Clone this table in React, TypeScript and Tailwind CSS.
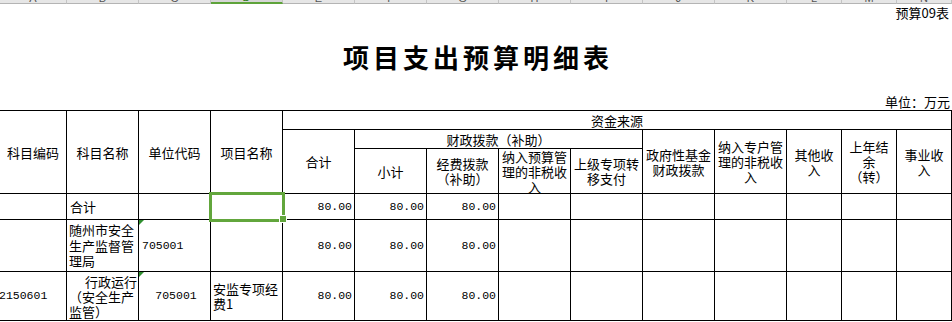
import React from "react";

const letters = ["A", "B", "C", "D", "E", "F", "G", "H", "I", "J", "K", "L", "M", "N"];

const hc =
  "border-r border-b border-black flex items-center justify-center text-center px-[2px] leading-[15px]";
const numCls =
  "border-r border-b border-black flex items-center justify-end pr-[2px] font-['Liberation_Mono',monospace] text-[11.5px]";
const emptyCls = "border-r border-b border-black";

function Num() {
  return <div className={numCls}>80.00</div>;
}

function Empties({ n }: { n: number }) {
  return (
    <>
      {Array.from({ length: n }).map((_, i) => (
        <div key={i} className={emptyCls} />
      ))}
    </>
  );
}

function Tri() {
  return (
    <div className="absolute top-0 left-0 w-0 h-0 border-t-[5px] border-t-[#2f8f2f] border-r-[5px] border-r-transparent" />
  );
}

export default function App() {
  return (
    <div className="w-[952px] h-[322px] overflow-hidden bg-white text-black font-['Noto_Sans_CJK_SC',sans-serif] text-[13px] [text-spacing-trim:space-all]">
      {/* Excel column header strip (cut off) */}
      <div className="grid grid-cols-[67px_repeat(10,72px)_55px_55px_55px] h-[4px] overflow-hidden bg-[#e6e6e6]">
        {letters.map((l, i) => (
          <div
            key={l}
            className={
              i === 3
                ? "flex justify-center items-end border-r border-r-[#c4c4c4] border-b-2 border-b-[#5ea33a] bg-[#d6d6d6] overflow-hidden text-[#2f7d1c]"
                : "flex justify-center items-end border-r border-r-[#c4c4c4] border-b border-b-[#b4b4b4] overflow-hidden text-[#555555]"
            }
          >
            <span className="-mb-[1px] text-[11px] leading-[11px] font-['Liberation_Sans',sans-serif]">{l}</span>
          </div>
        ))}
      </div>

      <div className="h-[18px] pt-[2px] pr-[3px] text-right text-[13px] leading-[13px]">预算09表</div>

      <div className="mt-[22px] h-[26px] text-center text-[26px] leading-[26px] font-bold tracking-[4px] pl-[4px]">
        项目支出预算明细表
      </div>

      <div className="mt-[25px] h-[13px] text-right pr-[2px] text-[13px] leading-[13px]">单位：万元</div>

      <div className="mt-[2px] grid grid-cols-[67px_repeat(10,72px)_55px_55px_55px] grid-rows-[19px_19px_45px_26px_52px_49px] border-t border-black">
        {/* header */}
        <div className={`${hc} col-start-1 row-start-1 row-span-3`}>科目编码</div>
        <div className={`${hc} col-start-2 row-start-1 row-span-3`}>科目名称</div>
        <div className={`${hc} col-start-3 row-start-1 row-span-3`}>单位代码</div>
        <div className={`${hc} col-start-4 row-start-1 row-span-3`}>项目名称</div>
        <div className={`${hc} col-start-5 col-span-10 row-start-1`}>资金来源</div>
        <div className={`${hc} col-start-5 row-start-2 row-span-2`}>合计</div>
        <div className={`${hc} col-start-6 col-span-4 row-start-2`}>财政拨款（补助）</div>
        <div className={`${hc} col-start-6 row-start-3`}>小计</div>
        <div className={`${hc} col-start-7 row-start-3`}>经费拨款（补助）</div>
        <div className={`${hc} col-start-8 row-start-3`}>纳入预算管理的非税收入</div>
        <div className={`${hc} col-start-9 row-start-3`}>上级专项转移支付</div>
        <div className={`${hc} col-start-10 row-start-2 row-span-2`}>政府性基金财政拨款</div>
        <div className={`${hc} col-start-11 row-start-2 row-span-2`}>纳入专户管理的非税收入</div>
        <div className={`${hc} col-start-12 row-start-2 row-span-2`}>其他收入</div>
        <div className={`${hc} col-start-13 row-start-2 row-span-2`}>上年结余（转）</div>
        <div className={`${hc} col-start-14 row-start-2 row-span-2`}>事业收入</div>

        {/* data row 1 */}
        <div className={emptyCls} />
        <div className="border-r border-b border-black flex items-center pl-[3px]">合计</div>
        <div className={emptyCls} />
        <div className="border-r border-b border-black relative">
          <div className="absolute z-10 left-[-2px] top-[-2px] w-[76px] h-[30px] border-[3px] border-[#62a63c]" />
          <div className="absolute z-20 left-[68px] top-[21px] w-[8px] h-[8px] bg-[#62a63c] border border-white" />
        </div>
        <Num />
        <Num />
        <Num />
        <Empties n={7} />

        {/* data row 2 */}
        <div className={emptyCls} />
        <div className="border-r border-b border-black flex items-center px-[2px] leading-[15.5px]">
          随州市安全生产监督管理局
        </div>
        <div className="border-r border-b border-black relative flex items-center pl-[3px] font-['Liberation_Mono',monospace] text-[11.5px]">
          <Tri />
          705001
        </div>
        <div className={emptyCls} />
        <Num />
        <Num />
        <Num />
        <Empties n={7} />

        {/* data row 3 */}
        <div className="border-r border-b border-black flex items-center font-['Liberation_Mono',monospace] text-[11.5px] -ml-[1px]">
          2150601
        </div>
        <div className="border-r border-b border-black flex flex-col justify-center px-[2px] leading-[15px] overflow-hidden">
          <span className="block whitespace-nowrap pl-[16px]">行政运行</span>
          <span className="block whitespace-nowrap">（安全生产</span>
          <span className="block whitespace-nowrap">监管）</span>
        </div>
        <div className="border-r border-b border-black relative flex items-center justify-center pl-[3px] font-['Liberation_Mono',monospace] text-[11.5px]">
          <Tri />
          705001
        </div>
        <div className="border-r border-b border-black flex items-center px-[2px] leading-[15px]">安监专项经费1</div>
        <Num />
        <Num />
        <Num />
        <Empties n={7} />
      </div>
    </div>
  );
}
